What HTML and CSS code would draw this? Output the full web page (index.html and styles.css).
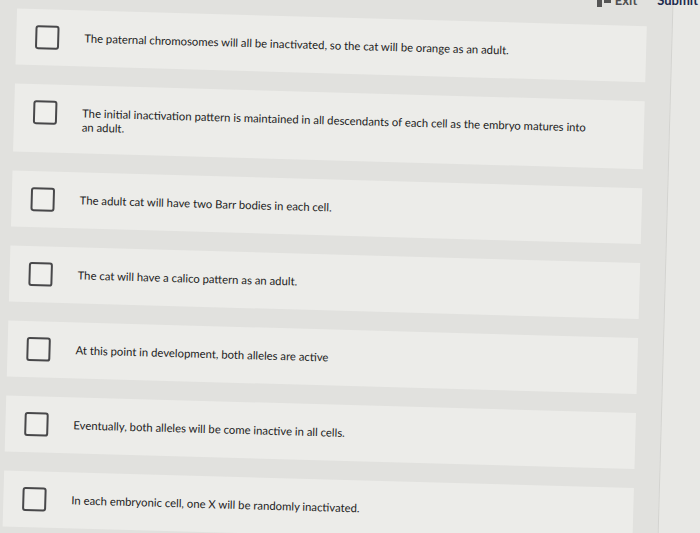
FILE: index.html
```html
<!DOCTYPE html>
<html lang="en">
<head>
<meta charset="utf-8">
<title>Question choices</title>
<link rel="stylesheet" href="styles.css">
</head>
<body>
<header class="topbar">
  <span class="exit"><svg class="exit-icon" width="14" height="10" viewBox="0 0 14 10"><rect x="0" y="0" width="5" height="10" fill="#555"/><rect x="7" y="3" width="7" height="3" fill="#555"/></svg>Exit</span>
  <span class="submit">Submit</span>
</header>
<main class="sheet">
  <section class="choices">
    <label class="choice"><span class="box"></span><span class="text">The paternal chromosomes will all be inactivated, so the cat will be orange as an adult.</span></label>
    <label class="choice choice-tall"><span class="box"></span><span class="text">The initial inactivation pattern is maintained in all descendants of each cell as the embryo matures into an adult.</span></label>
    <label class="choice"><span class="box"></span><span class="text">The adult cat will have two Barr bodies in each cell.</span></label>
    <label class="choice"><span class="box"></span><span class="text">The cat will have a calico pattern as an adult.</span></label>
    <label class="choice"><span class="box"></span><span class="text">At this point in development, both alleles are active</span></label>
    <label class="choice"><span class="box"></span><span class="text">Eventually, both alleles will be come inactive in all cells.</span></label>
    <label class="choice"><span class="box"></span><span class="text">In each embryonic cell, one X will be randomly inactivated.</span></label>
  </section>
  <aside class="rail"></aside>
</main>
</body>
</html>
```
FILE: styles.css
```css
html, body {
  margin: 0;
  padding: 0;
  overflow: hidden;
  background: #e1e1de;
}

body {
  font-family: Lato, "Open Sans", "Liberation Sans", sans-serif;
  color: #222222;
}

.topbar {
  position: relative;
  z-index: 1;
  height: 7px;
  overflow: hidden;
  display: flex;
  justify-content: flex-end;
  align-items: flex-end;
  gap: 20px;
  padding-right: 2px;
}

.exit,
.submit {
  font-size: 13px;
  line-height: 13px;
  font-weight: 700;
  display: flex;
  align-items: flex-end;
  gap: 4px;
}

.exit {
  color: #505052;
}

.submit {
  color: #1c2a4d;
}

.sheet {
  display: flex;
  width: 720px;
  min-height: 620px;
  margin-top: -19px;
  transform: rotate(1.6deg);
  transform-origin: 350px 278px;
}

.choices {
  width: 630px;
  margin-left: 10px;
  padding-top: 30px;
  display: flex;
  flex-direction: column;
  gap: 19px;
}

.choice {
  display: flex;
  align-items: flex-start;
  gap: 25px;
  padding: 16px 20px 16px 19px;
  background: #ecece9;
}

.choice-tall {
  padding-bottom: 19px;
}

.box {
  flex: 0 0 auto;
  width: 20px;
  height: 20px;
  border: 2px solid #48484a;
  border-radius: 3px;
  background: #efefec;
}

.text {
  max-width: 510px;
  margin-top: 5px;
  font-size: 11.3px;
  line-height: 14px;
}

.rail {
  flex: 1;
  margin-left: 25px;
  border-left: 1px solid #d3d3d0;
  background: #e8e8e5;
}
```
